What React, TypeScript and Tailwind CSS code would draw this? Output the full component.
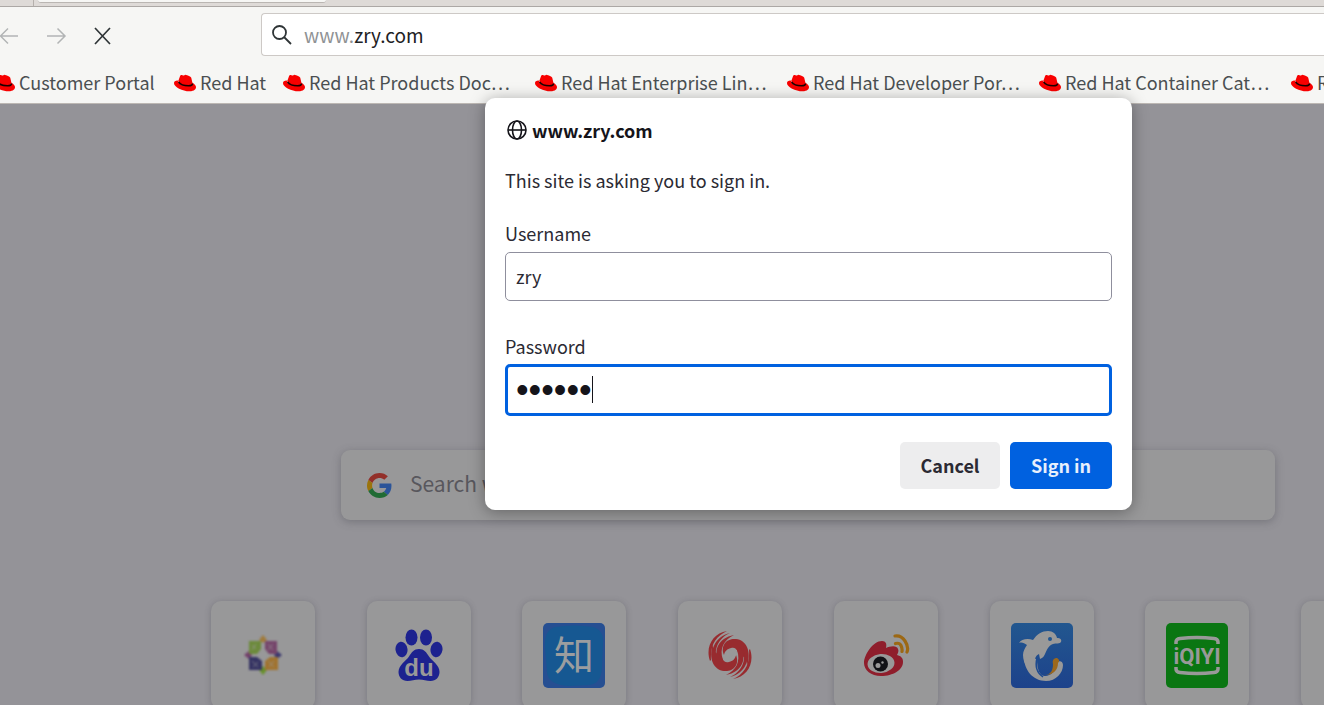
import { ReactNode, useState } from 'react';

const HAT =
  'M16.009 13.386c1.577 0 3.86-.326 3.86-2.202a1.765 1.765 0 0 0-.04-.431l-.94-4.08c-.216-.898-.406-1.305-1.982-2.093-1.223-.625-3.888-1.658-4.676-1.658-.733 0-.947.946-1.822.946-.842 0-1.467-.706-2.255-.706-.757 0-1.25.515-1.63 1.576 0 0-1.06 2.99-1.197 3.424a.81.81 0 0 0-.028.245c0 1.162 4.577 4.974 10.71 4.974m4.101-1.435c.218 1.032.218 1.14.218 1.277 0 1.765-1.984 2.745-4.593 2.745-5.895.004-11.06-3.451-11.06-5.734a2.326 2.326 0 0 1 .19-.925C2.746 9.415 0 9.794 0 12.217c0 3.969 9.405 8.861 16.851 8.861 5.71 0 7.149-2.582 7.149-4.62 0-1.605-1.387-3.425-3.887-4.512';

function HatIcon() {
  return (
    <svg viewBox="0 0 24 24" className="mt-0.5 size-[22px] shrink-0" aria-hidden="true">
      <path d="M5 8.500c-1.200 2.500 3.500 8.500 11 8.500 3.500 0 5.300-1.500 4.300-5.600z" fill="#f80000" />
      <path d={HAT} fill="#f80000" />
      <path d="M5 10.800c1.600 2.600 6.400 4.300 10.800 4.300 2.800 0 4.500-.8 4.400-2.500" fill="none" stroke="#1a0000" strokeWidth="1.700" />
    </svg>
  );
}

function GoogleIcon() {
  return (
    <svg viewBox="0 0 48 48" className="size-[25px] shrink-0" aria-hidden="true">
      <path
        fill="#93302a"
        d="M24 9.500c3.540 0 6.710 1.220 9.210 3.600l6.850-6.850C35.900 2.380 30.470 0 24 0 14.620 0 6.510 5.380 2.560 13.220l7.980 6.190C12.430 13.720 17.740 9.500 24 9.500z"
      />
      <path
        fill="#2b5499"
        d="M46.980 24.550c0-1.570-.15-3.090-.38-4.550H24v9.020h12.940c-.58 2.960-2.260 5.480-4.780 7.180l7.730 6c4.510-4.180 7.090-10.360 7.090-17.650z"
      />
      <path
        fill="#9b740c"
        d="M10.530 28.590c-.48-1.450-.76-2.990-.76-4.590s.27-3.140.76-4.590l-7.980-6.190C.92 16.460 0 20.120 0 24c0 3.880.92 7.540 2.560 10.780l7.970-6.190z"
      />
      <path
        fill="#206b34"
        d="M24 48c6.480 0 11.930-2.130 15.890-5.810l-7.730-6c-2.150 1.450-4.920 2.300-8.160 2.300-6.260 0-11.570-4.220-13.470-9.910l-7.980 6.190C6.510 42.620 14.620 48 24 48z"
      />
    </svg>
  );
}

function FlowerIcon() {
  return (
    <svg viewBox="0 0 40 42" className="h-[42px] w-10">
      <g className="blur-[1px]">
        <path d="M20 1l4 5-4 3-4-3z" fill="#a07a3a" />
        <path d="M20 41l4-5-4-4-4 4z" fill="#68902c" />
        <path d="M1 21l5-4 3 4-3 4z" fill="#73406b" />
        <path d="M39 21l-5-4-3 4 3 4z" fill="#3b386f" />
        <path d="M6 7h12v8l-4 5H6z" fill="#6c8a3b" />
        <path d="M22 7h12v13h-8l-4-5z" fill="#75446a" />
        <path d="M6 23h8l5 4v9H6z" fill="#353363" />
        <path d="M22 27l5-4h8v13H22z" fill="#a0732f" />
        <path d="M9 11l4 4m0-5l-4 6M25 10l5 6m0-6l-5 6M9 27l6 6m0-5l-5 5M25 27l6 6m0-6l-5 6" stroke="#999" strokeWidth="1" opacity=".7" />
      </g>
    </svg>
  );
}

function BaiduIcon() {
  return (
    <svg viewBox="0 0 48 52" className="h-[52px] w-12">
      <g fill="#1d228f">
        <ellipse cx="16.500" cy="8.500" rx="6" ry="8" />
        <ellipse cx="31" cy="8.500" rx="6" ry="8" />
        <ellipse cx="6.500" cy="20.500" rx="6" ry="7.700" transform="rotate(-8 6.500 20.500)" />
        <ellipse cx="41.500" cy="20.500" rx="6" ry="7.700" transform="rotate(8 41.500 20.500)" />
        <path d="M24 20c5 0 7.500 3.500 10 7.500 3 4.500 10.500 8.500 10.500 15.500 0 5-3.500 9-9 9-4 0-7-1.500-11.500-1.500S16.500 52 12.500 52c-5.500 0-9-4-9-9C3.500 36 11 32 14 27.500 16.500 23.500 19 20 24 20z" />
      </g>
      <text x="24" y="47" textAnchor="middle" fontSize="24" fontWeight="700" fontFamily="'Liberation Sans', sans-serif" fill="#999">
        du
      </text>
    </svg>
  );
}

function ZhihuIcon() {
  return (
    <svg viewBox="0 0 62 65" className="h-[65px] w-[62px] overflow-visible">
      <rect width="62" height="65" rx="5" fill="#264f92" />
      <path d="M12 4Q31 1 50 4q11 3 10 16l-1 25q-1 16-13 17l-20 1Q5 62 4 49L2 24Q1 7 12 4z" fill="#165892" />
      <text x="31" y="47" textAnchor="middle" fontSize="40" fontWeight="400" fontFamily="'Noto Sans CJK SC', sans-serif" fill="#9b9d9f">
        知
      </text>
    </svg>
  );
}

function PhoenixWing() {
  return (
    <g fill="#982b2f">
      <path d="M17 24C13 14 20 7 29 8c10 1 16 12 11 27 0-5-1-8-5-10-2-1-3-2-4-4-2-4-4-5-7-4-4 1-6 3-7 7z" />
      <path d="M13 32C5 21 11 7 27 4 17 9 12 17 16 29z" />
      <path d="M8 34C1 21 8 5 23 2 12 7 6 17 10 32z" />
      <path d="M3 30C-2 16 6 2 20 0 9 5 3 14 4 29z" />
    </g>
  );
}

function PhoenixIcon() {
  return (
    <svg viewBox="0 0 46 48" className="h-12 w-[46px]">
      <PhoenixWing />
      <g transform="rotate(180 23 24)">
        <PhoenixWing />
      </g>
      <path d="M19 26c1-3 4-4 6-6l4 0c0 4-2 6-6 8" fill="none" stroke="#999" strokeWidth="2" />
    </svg>
  );
}

function WeiboIcon() {
  return (
    <svg viewBox="0 0 46 43" className="ml-0.5 h-[43px] w-[46px]">
      <path
        d="M17 42C7 42 0 36 0 29 0 21 9 7 18 7c4 0 5 3 4 7 4-2 11-3 12 1 1 2 0 4-1 6 4 1 6 3 6 7 0 8-10 14-22 14z"
        fill="#8f1e2c"
      />
      <ellipse cx="17" cy="29.500" rx="13.500" ry="9.500" transform="rotate(-5 17 29.500)" fill="#999" />
      <circle cx="16.500" cy="30" r="7.500" fill="#111216" />
      <circle cx="14" cy="31.500" r="2.500" fill="#999" />
      <circle cx="18.500" cy="28.500" r="1.200" fill="#999" />
      <path d="M31 2q6-1 10 5t2 11M31.500 9.500q4-1 5.500 2t1 6" fill="none" stroke="#9c6814" strokeWidth="3.200" strokeLinecap="round" />
    </svg>
  );
}

function CtripIcon() {
  return (
    <svg viewBox="0 0 62 65" className="h-[65px] w-[62px]">
      <defs>
        <linearGradient id="sea" x1="0" y1="0" x2="0" y2="1">
          <stop offset="0" stopColor="#22578f" />
          <stop offset="1" stopColor="#1d428b" />
        </linearGradient>
      </defs>
      <rect width="62" height="65" rx="5" fill="url(#sea)" />
      <path
        d="M8 20c2-4 9-5 14-3 4-6 9-9 15-9 5 0 8 3 9 7 3 0 5 1 4 4-1 2-5 1-8 2-5 2-6 6-8 10-1 2-2 4-5 5l-1-5c-7 3-6 16 3 23C18 50 12 41 12 32c0-4 2-7 4-10-3-2-5-3-8-2z"
        fill="#999"
      />
      <path d="M13 34c0 13 9 24 22 24 10 0 17-8 17-16 0-4-4-5-6-2-1 8-6 13-12 13-5 0-8-6-8-17z" fill="#999" />
      <path d="M31 52c9 1 11-5 11-11-1-4 1-6 4-6 2 1 3 3 1 5 0 7-5 13-16 12z" fill="#9c681d" />
      <path d="M26 35c-2 8 0 15 6 19" fill="none" stroke="#1e4b90" strokeWidth="1.500" />
      <circle cx="39" cy="16" r="2" fill="#22558f" />
    </svg>
  );
}

function IqiyiIcon() {
  return (
    <svg viewBox="0 0 62 65" className="h-[65px] w-[62px]">
      <rect width="62" height="65" rx="5" fill="#0a7612" />
      <path d="M10 21v-2q0-3 4-3.500 17-2 34 0 4 .5 4 3.500v2M10 44v2q0 3 4 3.500 17 2 34 0 4-.5 4-3.500v-2" fill="none" stroke="#999" strokeWidth="3.500" />
      <text x="31" y="41" textAnchor="middle" fontSize="22" fontWeight="700" fontFamily="Roboto, sans-serif" fill="#999">
        iQIYI
      </text>
    </svg>
  );
}

const bookmarks = [
  { label: 'Red Hat Products Doc…' },
  { label: 'Red Hat Enterprise Lin…' },
  { label: 'Red Hat Developer Por…' },
  { label: 'Red Hat Container Cat…' },
  { label: 'Red Hat Remote' },
];

const topSites: { name: string; icon: ReactNode }[] = [
  { name: 'Start', icon: <FlowerIcon /> },
  { name: 'Baidu', icon: <BaiduIcon /> },
  { name: 'Zhihu', icon: <ZhihuIcon /> },
  { name: 'Ifeng', icon: <PhoenixIcon /> },
  { name: 'Weibo', icon: <WeiboIcon /> },
  { name: 'Ctrip', icon: <CtripIcon /> },
  { name: 'iQIYI', icon: <IqiyiIcon /> },
  { name: 'More', icon: null },
];

function Bookmark({ label, className = '' }: { label: string; className?: string }) {
  return (
    <a href="#" className={`flex shrink-0 items-center gap-1 ${className}`}>
      <HatIcon />
      <span className="whitespace-nowrap">{label}</span>
    </a>
  );
}

function Toolbar() {
  return (
    <header className="border-b border-[#bcb7b3] bg-[#f6f6f4]">
      <div className="flex h-[7px] border-b border-[#aca8a5] bg-[#dedad7]">
        <div className="w-[34px] border-r border-[#b5b0ac]" />
        <div className="ml-1 h-[3px] w-72 rounded-b-md border-b border-[#bab6b2] bg-[#f6f6f4]" />
      </div>
      <div className="flex h-[49px] items-end">
        <nav className="flex h-[43px] w-[261px] shrink-0 items-center pt-0.5 text-[#b2b4b5]">
          <button aria-label="Back" className="-ml-px">
            <svg viewBox="0 0 20 20" className="size-5" fill="none" stroke="currentColor" strokeWidth="1.500">
              <path d="M19 10H2M9 2.500L1.500 10 9 17.500" />
            </svg>
          </button>
          <button aria-label="Forward" className="ml-7">
            <svg viewBox="0 0 20 20" className="size-5" fill="none" stroke="currentColor" strokeWidth="1.500">
              <path d="M0 10h17M10.500 2.500L18 10l-7.500 7.500" />
            </svg>
          </button>
          <button aria-label="Stop" className="ml-[26px] text-[#2e3436]">
            <svg viewBox="0 0 20 20" className="size-5" fill="none" stroke="currentColor" strokeWidth="1.700">
              <path d="M2 2l15 16M17 2L2 18" />
            </svg>
          </button>
        </nav>
        <div className="flex h-[43px] grow items-center rounded-l border border-r-0 border-[#cdc9c6] bg-white pl-2.5">
          <svg viewBox="0 0 20 20" className="size-5" fill="none" stroke="#2e3436" strokeWidth="1.800">
            <circle cx="7.500" cy="7.500" r="6.500" />
            <path d="M12 12l7 7" />
          </svg>
          <div className="pl-3 text-[19px] leading-6 text-[#1e2224]">
            <span className="text-[#8f9294]">www.</span>zry.com
          </div>
        </div>
      </div>
      <nav className="flex h-[47px] items-center overflow-hidden pt-1 leading-6 text-[#4a4f51]">
        <Bookmark label="Customer Portal" className="-ml-[7px] w-[181px]" />
        <Bookmark label="Red Hat" className="w-[109px]" />
        {bookmarks.map((b) => (
          <Bookmark key={b.label} label={b.label} className="w-[252px]" />
        ))}
      </nav>
    </header>
  );
}

function SignInDialog() {
  const [username, setUsername] = useState('zry');
  const [password, setPassword] = useState('123456');

  return (
    <form
      role="dialog"
      onSubmit={(e) => e.preventDefault()}
      className="absolute top-[98px] left-[485px] w-[647px] rounded-[10px] bg-white px-5 pt-[19px] pb-[21px] leading-[26px] text-[#2b2a33] shadow-[0_2px_16px_rgba(0,0,0,0.35)]"
    >
      <h1 className="flex items-center gap-[5px] font-bold text-[#15141a]">
        <svg viewBox="0 0 20 20" className="ml-0.5 size-5" fill="none" stroke="currentColor" strokeWidth="1.600">
          <circle cx="10" cy="10" r="9" />
          <ellipse cx="10" cy="10" rx="4.500" ry="9" />
          <path d="M1 10h18" />
        </svg>
        www.zry.com
      </h1>
      <p className="mt-6">This site is asking you to sign in.</p>

      <label htmlFor="username" className="mt-[27px] block">
        Username
      </label>
      <input
        id="username"
        value={username}
        onChange={(e) => setUsername(e.target.value)}
        className="mt-1.5 block h-[49px] w-full rounded-[5px] border border-[#8f8f9d] bg-white px-2.5 pb-0.5 outline-none"
      />

      <label htmlFor="password" className="mt-8 block">
        Password
      </label>
      <div className="relative mt-[5px]">
        <input
          id="password"
          type="password"
          value={password}
          onChange={(e) => setPassword(e.target.value)}
          className="block h-[52px] w-full rounded-[5px] border-[3px] border-[#0061e0] bg-white px-2 font-['Liberation_Sans',sans-serif] text-4xl text-[#15141a] outline-none"
        />
        <span className="absolute top-3 left-[87px] h-[27px] w-px bg-[#15141a]" />
      </div>

      <div className="mt-[26px] flex justify-end gap-2.5 font-bold">
        <button type="button" className="h-[47px] w-[100px] rounded-[5px] bg-[#ededee] pb-0.5 text-[#2b2a33]">
          Cancel
        </button>
        <button type="submit" className="h-[47px] w-[102px] rounded-[5px] bg-[#0061e0] pb-0.5 text-[#e8f0fc]">
          Sign in
        </button>
      </div>
    </form>
  );
}

export default function App() {
  return (
    <div className="relative flex h-screen flex-col overflow-hidden bg-[#949398] font-['Noto_Sans_CJK_SC',sans-serif] text-lg">
      <Toolbar />
      <main className="grow pt-[346px]">
        <div className="mr-[49px] ml-[341px] flex h-[70px] items-center gap-[18px] rounded-[9px] bg-[#989899] pl-[26px] shadow-[0_2px_8px_rgba(60,60,70,0.35)]">
          <GoogleIcon />
          <input
            aria-label="Search the web"
            placeholder="Search with Google or enter address"
            className="grow bg-transparent pb-1 text-[21px] text-[#55555c] outline-none placeholder:text-[#58575d]"
          />
        </div>
        <div className="mt-[81px] -mr-[81px] ml-[211px] flex justify-between">
          {topSites.map((site) => (
            <a
              key={site.name}
              href="#"
              aria-label={site.name}
              className="flex h-[108px] w-[104px] items-center justify-center rounded-[10px] bg-[#989899] shadow-[0_1px_6px_rgba(60,60,70,0.3)]"
            >
              {site.icon}
            </a>
          ))}
        </div>
      </main>
      <SignInDialog />
    </div>
  );
}
